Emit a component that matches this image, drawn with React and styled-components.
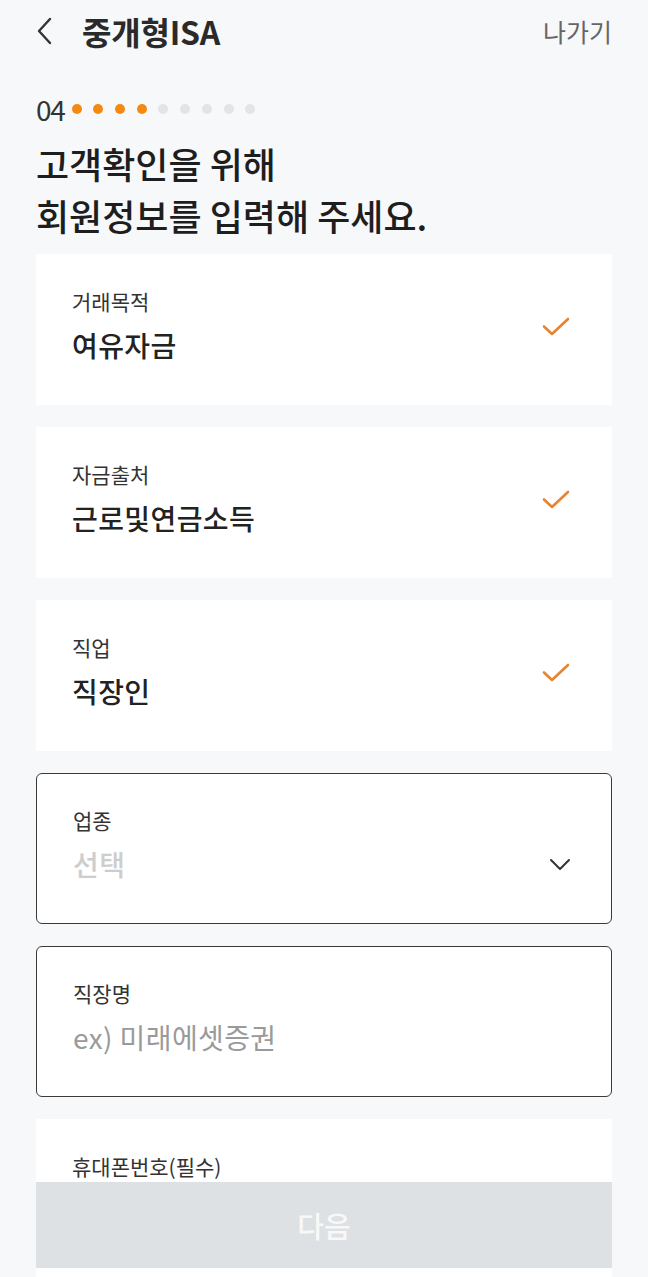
import React from "react"
import styled, { createGlobalStyle } from "styled-components"

const Global = createGlobalStyle`
  html, body {
    margin: 0;
    padding: 0;
    background: #f7f8fa;
  }
  body {
    font-family: "Noto Sans CJK KR", "Noto Sans", sans-serif;
    color: #222;
  }
`

const Page = styled.div`
  position: relative;
  width: 648px;
  height: 1277px;
  overflow: hidden;
  background: #f7f8fa;
`

const Header = styled.header`
  display: flex;
  align-items: center;
  height: 62px;
  padding: 0 36px 0 32px;
`

const BackButton = styled.button`
  display: flex;
  align-items: center;
  justify-content: center;
  width: 24px;
  height: 30px;
  padding: 0;
  border: none;
  background: none;
  margin-right: 26px;
`

const Title = styled.h1`
  flex: 1;
  margin: 0;
  font-size: 32px;
  font-weight: 700;
  color: #2a2a2a;
  letter-spacing: -0.2px;
`

const Exit = styled.span`
  font-size: 25px;
  color: #666;
`

const Content = styled.main`
  padding: 0 36px;
`

const Step = styled.div`
  display: flex;
  align-items: center;
  height: 30px;
  margin-top: 32px;
`

const StepNo = styled.span`
  font-size: 28px;
  color: #333;
  letter-spacing: -1.2px;
  margin-right: 7px;
`

const Dots = styled.div`
  display: flex;
  gap: 11.7px;
`

const Dot = styled.span`
  width: 10px;
  height: 10px;
  border-radius: 50%;
  background: ${(p) => (p.$on ? "#f5890f" : "#e2e4e7")};
`

const Heading = styled.h2`
  margin: 13px 0 13px;
  font-size: 36px;
  line-height: 52px;
  font-weight: 500;
  color: #1e1e1e;
  letter-spacing: 0;
`

const Cards = styled.div`
  display: flex;
  flex-direction: column;
  gap: 22px;
`

const Card = styled.div`
  box-sizing: border-box;
  display: flex;
  align-items: center;
  height: 151px;
  padding: 0 42px 6px 36px;
  background: #fff;
  border: ${(p) => (p.$outlined ? "1.5px solid #3a3a3a" : "none")};
  border-radius: ${(p) => (p.$outlined ? "6px" : "0")};
`

const Fields = styled.div`
  flex: 1;
  display: flex;
  flex-direction: column;
  gap: 12px;
`

const Label = styled.span`
  font-size: 21px;
  line-height: 24px;
  color: #333;
`

const ValueRow = styled.div`
  display: flex;
  align-items: center;
  justify-content: space-between;
  height: 40px;
  margin-right: -2px;
`

const Value = styled.span`
  font-size: 28px;
  line-height: 40px;
  letter-spacing: 0.4px;
  font-weight: ${(p) => (p.$tone === "hint" ? 400 : 500)};
  color: ${(p) =>
    p.$tone === "empty" ? "#cdcdcd" : p.$tone === "hint" ? "#9a9a9a" : "#222"};
`

const PartialCard = styled.div`
  height: 160px;
  padding: 35px 36px 0;
  box-sizing: border-box;
  background: #fff;
`

const NextButton = styled.button`
  position: absolute;
  left: 36px;
  right: 36px;
  bottom: 9px;
  height: 86px;
  border: none;
  background: #dee1e4;
  color: #f8f8f8;
  font-family: "Noto Sans CJK KR", sans-serif;
  font-size: 29px;
  font-weight: 500;
`

const Check = () => (
  <svg width="28" height="20" viewBox="0 0 28 20">
    <path d="M2 9.5 L10 17 L26 2" fill="none" stroke="#e8832f" strokeWidth="2.6" strokeLinecap="round" strokeLinejoin="round" />
  </svg>
)

const ChevronDown = () => (
  <svg width="22" height="14" viewBox="0 0 22 14">
    <path d="M2 3 L11 12 L20 3" fill="none" stroke="#333" strokeWidth="2" strokeLinecap="round" strokeLinejoin="round" />
  </svg>
)

const ChevronLeft = () => (
  <svg width="18" height="28" viewBox="0 0 18 28">
    <path d="M15 2 L4 14 L15 26" fill="none" stroke="#333" strokeWidth="2.4" strokeLinecap="round" strokeLinejoin="round" />
  </svg>
)

const done = [
  { label: "거래목적", value: "여유자금" },
  { label: "자금출처", value: "근로및연금소득" },
  { label: "직업", value: "직장인" },
]

export default function App() {
  return (
    <Page>
      <Global />
      <Header>
        <BackButton aria-label="뒤로">
          <ChevronLeft />
        </BackButton>
        <Title>중개형ISA</Title>
        <Exit>나가기</Exit>
      </Header>
      <Content>
        <Step>
          <StepNo>04</StepNo>
          <Dots>
            {Array.from({ length: 9 }).map((_, i) => (
              <Dot key={i} $on={i < 4} />
            ))}
          </Dots>
        </Step>
        <Heading>
          고객확인을 위해
          <br />
          회원정보를 입력해 주세요.
        </Heading>
        <Cards>
          {done.map((d) => (
            <Card key={d.label}>
              <Fields>
                <Label>{d.label}</Label>
                <ValueRow>
                  <Value>{d.value}</Value>
                </ValueRow>
              </Fields>
              <Check />
            </Card>
          ))}
          <Card $outlined>
            <Fields>
              <Label>업종</Label>
              <ValueRow>
                <Value $tone="empty">선택</Value>
                <ChevronDown />
              </ValueRow>
            </Fields>
          </Card>
          <Card $outlined>
            <Fields>
              <Label>직장명</Label>
              <ValueRow>
                <Value $tone="hint">ex) 미래에셋증권</Value>
              </ValueRow>
            </Fields>
          </Card>
          <PartialCard>
            <Label>휴대폰번호(필수)</Label>
          </PartialCard>
        </Cards>
      </Content>
      <NextButton>다음</NextButton>
    </Page>
  )
}
